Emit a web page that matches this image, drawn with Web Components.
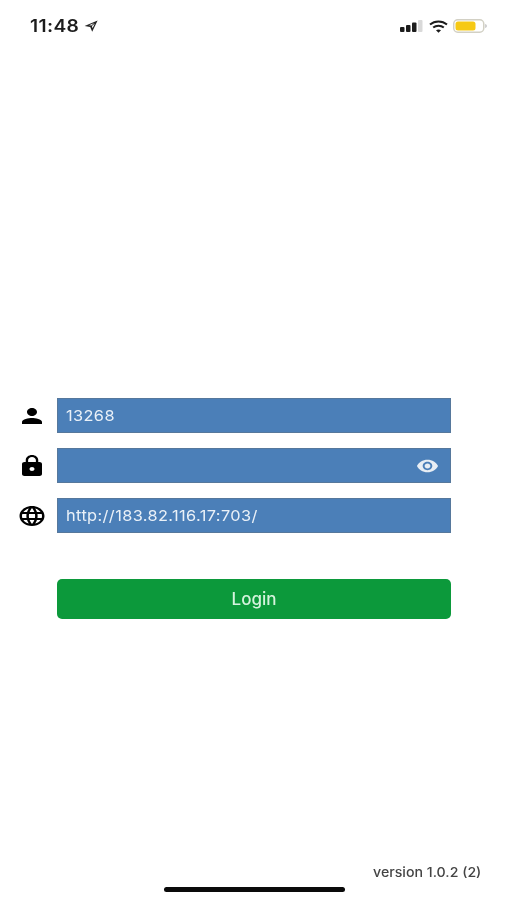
<!DOCTYPE html>
<html>
<head>
<meta charset="utf-8">
<title>Login</title>
<style>
  html, body { margin: 0; height: 100%; background: #fff; }
  body { font-family: Inter, "Liberation Sans", sans-serif; }
</style>
</head>
<body>
<login-page>
  <status-bar slot="status" time="11:48"></status-bar>

  <login-field value="13268">
    <svg slot="icon" viewBox="0 0 24 24" preserveAspectRatio="none"><path d="M12 12c2.21 0 4-1.79 4-4s-1.79-4-4-4-4 1.79-4 4 1.79 4 4 4zm0 2c-2.67 0-8 1.34-8 4v2h16v-2c0-2.66-5.33-4-8-4z"/></svg>
  </login-field>
  <login-field>
    <svg slot="icon" viewBox="0 0 24 24" preserveAspectRatio="none"><path d="M18 8h-1V6c0-2.76-2.24-5-5-5S7 3.24 7 6v2H6c-1.1 0-2 .9-2 2v10c0 1.1.9 2 2 2h12c1.1 0 2-.9 2-2V10c0-1.1-.9-2-2-2zm-6 9c-1.1 0-2-.9-2-2s.9-2 2-2 2 .9 2 2-.9 2-2 2zm3.1-9H8.9V6c0-1.71 1.39-3.1 3.1-3.1 1.71 0 3.1 1.39 3.1 3.1v2z"/></svg>
    <svg slot="action" viewBox="0 0 24 24" preserveAspectRatio="none"><path d="M12 4.5C7 4.5 2.73 7.61 1 12c1.73 4.39 6 7.5 11 7.5s9.27-3.11 11-7.5c-1.73-4.39-6-7.5-11-7.5zM12 17c-2.76 0-5-2.24-5-5s2.24-5 5-5 5 2.24 5 5-2.24 5-5 5zm0-8c-1.66 0-3 1.34-3 3s1.34 3 3 3 3-1.34 3-3-1.34-3-3-3z"/></svg>
  </login-field>
  <login-field value="http://183.82.116.17:703/">
    <svg slot="icon" viewBox="0 0 24 24" preserveAspectRatio="none"><path d="M11.99 2C6.47 2 2 6.48 2 12s4.47 10 9.99 10C17.52 22 22 17.52 22 12S17.52 2 11.99 2zm6.93 6h-2.95c-.32-1.25-.78-2.45-1.38-3.56 1.84.63 3.37 1.91 4.33 3.56zM12 4.04c.83 1.2 1.48 2.53 1.91 3.96h-3.82c.43-1.43 1.08-2.76 1.91-3.96zM4.26 14C4.1 13.36 4 12.69 4 12s.1-1.36.26-2h3.38c-.08.66-.14 1.32-.14 2 0 .68.06 1.34.14 2H4.26zm.82 2h2.95c.32 1.25.78 2.45 1.38 3.56-1.84-.63-3.37-1.9-4.33-3.56zm2.95-8H5.08c.96-1.66 2.49-2.93 4.33-3.56C8.81 5.55 8.35 6.75 8.03 8zM12 19.96c-.83-1.2-1.48-2.53-1.91-3.96h3.82c-.43 1.43-1.08 2.76-1.91 3.96zM14.34 14H9.66c-.09-.66-.16-1.32-.16-2 0-.68.07-1.35.16-2h4.68c.09.65.16 1.32.16 2 0 .68-.07 1.34-.16 2zm.25 5.56c.6-1.11 1.06-2.31 1.38-3.56h2.95c-.96 1.65-2.49 2.93-4.33 3.56zM16.36 14c.08-.66.14-1.32.14-2 0-.68-.06-1.34-.14-2h3.38c.16.64.26 1.31.26 2s-.1 1.36-.26 2h-3.38z"/></svg>
  </login-field>
  <login-button slot="button">Login</login-button>

  <span slot="version">version 1.0.2 (2)</span>
</login-page>

<script>
function html (statics) {
  const template = document.createElement('template');
  template.innerHTML = statics.join('');
  return () => template.content.cloneNode(true);
}

const PAGE = html`
  <style>
    :host {
      display: flex;
      flex-direction: column;
      height: 900px;
      overflow: hidden;
      background: #fff;
      filter: blur(0.35px);
    }
    .form {
      display: flex;
      flex-direction: column;
      gap: 15px;
      margin-top: 350px;
    }
    .button { margin-top: 46px; padding-left: 57px; }
    footer {
      margin-top: auto;
      position: relative;
      height: 44px;
      box-sizing: border-box;
      display: flex;
      justify-content: flex-end;
      padding: 8px 26px 0 0;
      font-size: 13px;
      font-weight: 500;
      color: #444;
    }
    ::slotted([slot="version"]) { transform: scaleX(1.09); transform-origin: right center; }
    /* home indicator lies over the footer */
    .home {
      position: absolute;
      left: 164px;
      top: 31px;
      width: 181px;
      height: 5px;
      border-radius: 3px;
      background: #0a0a0a;
    }
  </style>
  <slot name="status"></slot>
  <div class="form"><slot></slot></div>
  <div class="button"><slot name="button"></slot></div>
  <footer><slot name="version"></slot><div class="home"></div></footer>
`;

class LoginPage extends HTMLElement {
  constructor () {
    super();
    this.attachShadow({ mode: 'open' }).appendChild(PAGE());
  }
}

const STATUS = html`
  <style>
    :host {
      display: flex;
      align-items: center;
      height: 48px;
      padding: 4px 20px 0 30px;
      box-sizing: border-box;
      color: #1c1c1c;
    }
    .time {
      font-size: 17px;
      font-weight: 600;
      letter-spacing: 0.3px;
      transform: scaleX(1.13);
      transform-origin: left center;
    }
    .arrow { width: 14px; height: 12px; margin-left: 10px; }
    .right { margin-left: auto; display: flex; align-items: center; }
    .wifi { margin: 0 5px 0 6px; }
  </style>
  <span class="time"></span>
  <svg class="arrow" viewBox="0 0 14 12"><path d="M13.6 .4 .6 6 6.2 7 8.2 11.8zM10.2 3 7.4 5.6 5 5.3zM10.8 3.6 8.6 8.2 7.9 6.1z" fill="#222" fill-rule="evenodd"/></svg>
  <div class="right">
    <svg width="23" height="12" viewBox="0 0 23 12">
      <rect x="0" y="7" width="4.5" height="5" rx="1" fill="#1c1c1c"/>
      <rect x="6" y="5" width="4.5" height="7" rx="1" fill="#1c1c1c"/>
      <rect x="12" y="2.5" width="4.5" height="9.5" rx="1" fill="#1c1c1c"/>
      <rect x="18" y="0" width="4.5" height="12" rx="1" fill="#d9d9d9"/>
    </svg>
    <svg class="wifi" width="19" height="13" viewBox="0 0 19 13" fill="none" stroke="#1c1c1c" stroke-width="2">
      <path d="M1 4.6C5.8.4 13.2.4 18 4.6"/>
      <path d="M4.2 7.6c3-2.5 7.6-2.5 10.6 0"/>
      <path d="M9.5 12.8 7 10.2c1.4-1.1 3.6-1.1 5 0z" fill="#1c1c1c" stroke="none"/>
    </svg>
    <svg width="34" height="14" viewBox="0 0 34 14">
      <rect x=".75" y=".75" width="30" height="12.5" rx="4" fill="#fff" stroke="#d2d0c4" stroke-width="1.5"/>
      <rect x="2.5" y="2.5" width="20" height="9" rx="2.5" fill="#f6c915"/>
      <path d="M32.3 5v4c.9-.3 1.4-1.1 1.4-2s-.5-1.7-1.4-2z" fill="#bbb"/>
    </svg>
  </div>
`;

class StatusBar extends HTMLElement {
  constructor () {
    super();
    this.attachShadow({ mode: 'open' }).appendChild(STATUS());
    this.shadowRoot.querySelector('.time').textContent = this.getAttribute('time');
  }
}

const FIELD = html`
  <style>
    :host {
      display: flex;
      align-items: center;
      padding-left: 17px;
      gap: 10px;
      height: 35px;
    }
    .icon { display: flex; width: 30px; height: 24px; }
    ::slotted(svg[slot="icon"]) { width: 30px; height: 24px; fill: #000; }
    .box {
      width: 394px;
      height: 35px;
      box-sizing: border-box;
      display: flex;
      align-items: center;
      padding: 0 11px 0 8px;
      background: #4b7fb8;
      border: 1px solid #56789c;
      color: #eaf1f8;
      font-size: 15px;
      letter-spacing: 0.35px;
    }
    .value { flex: 1; transform: scaleX(1.09); transform-origin: left center; }
    ::slotted(svg[slot="action"]) { display: block; width: 23px; height: 20px; fill: #e8eef4; }
  </style>
  <div class="icon"><slot name="icon"></slot></div>
  <div class="box"><span class="value"></span><slot name="action"></slot></div>
`;

class LoginField extends HTMLElement {
  constructor () {
    super();
    this.attachShadow({ mode: 'open' }).appendChild(FIELD());
    this.shadowRoot.querySelector('.value').textContent = this.getAttribute('value') || '';
  }
}

const BUTTON = html`
  <style>
    :host {
      display: flex;
      align-items: center;
      justify-content: center;
      width: 394px;
      height: 40px;
      border-radius: 5px;
      background: #0c993b;
      color: #d5f3dd;
      font-size: 17px;
      font-weight: 500;
    }
  </style>
  <slot></slot>
`;

class LoginButton extends HTMLElement {
  constructor () {
    super();
    this.attachShadow({ mode: 'open' }).appendChild(BUTTON());
  }
}

customElements.define('login-page', LoginPage);
customElements.define('status-bar', StatusBar);
customElements.define('login-field', LoginField);
customElements.define('login-button', LoginButton);
</script>
</body>
</html>
